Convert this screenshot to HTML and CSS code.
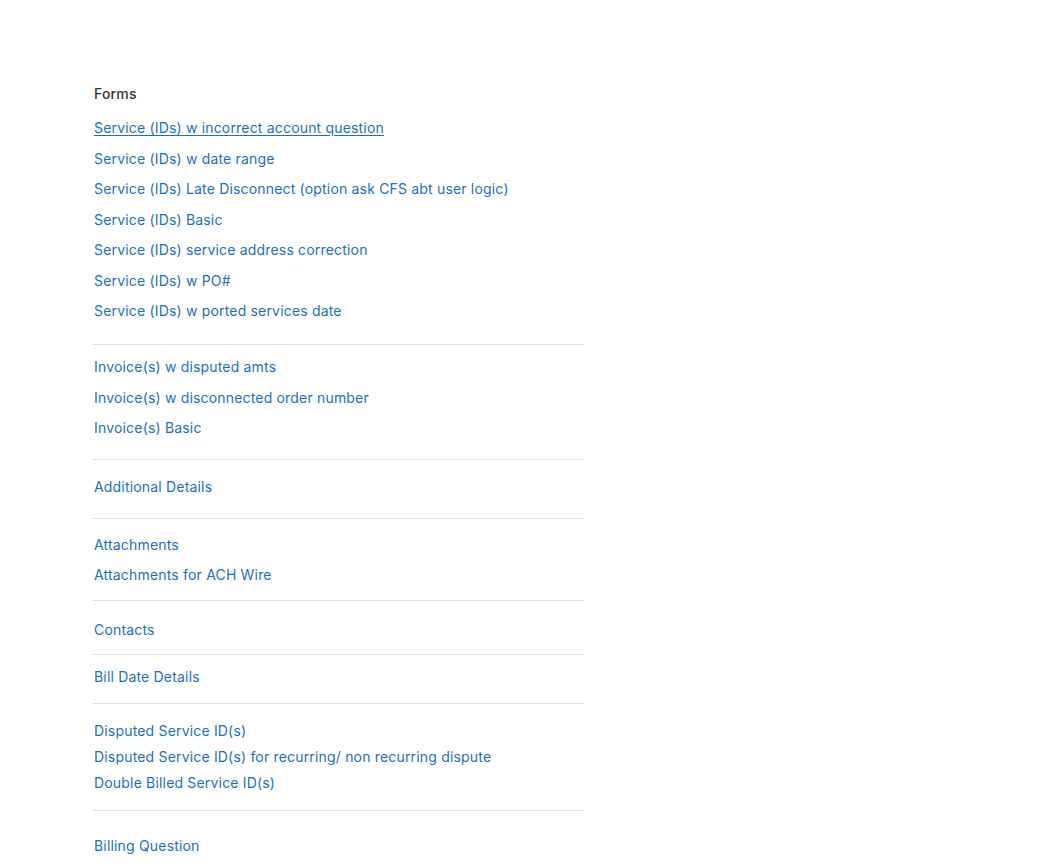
FILE: index.html
```html
<!DOCTYPE html>
<html lang="en">
<head>
<meta charset="utf-8">
<title>Forms</title>
<link rel="stylesheet" href="styles.css">
</head>
<body>
<div class="panel">
  <div class="group g1">
    <div class="title">Forms</div>
    <a class="link hover" href="#">Service (IDs) w incorrect account question</a>
    <a class="link" href="#">Service (IDs) w date range</a>
    <a class="link" href="#">Service (IDs) Late Disconnect (option ask CFS abt user logic)</a>
    <a class="link" href="#">Service (IDs) Basic</a>
    <a class="link" href="#">Service (IDs) service address correction</a>
    <a class="link" href="#">Service (IDs) w PO#</a>
    <a class="link" href="#">Service (IDs) w ported services date</a>
  </div>
  <div class="group g2">
    <a class="link" href="#">Invoice(s) w disputed amts</a>
    <a class="link" href="#">Invoice(s) w disconnected order number</a>
    <a class="link" href="#">Invoice(s) Basic</a>
  </div>
  <div class="group g3">
    <a class="link" href="#">Additional Details</a>
  </div>
  <div class="group g4">
    <a class="link" href="#">Attachments</a>
    <a class="link" href="#">Attachments for ACH Wire</a>
  </div>
  <div class="group g5">
    <a class="link" href="#">Contacts</a>
  </div>
  <div class="group g6">
    <a class="link" href="#">Bill Date Details</a>
  </div>
  <div class="group g7">
    <a class="link" href="#">Disputed Service ID(s)</a>
    <a class="link" href="#">Disputed Service ID(s) for recurring/ non recurring dispute</a>
    <a class="link" href="#">Double Billed Service ID(s)</a>
  </div>
  <div class="group g8 last">
    <a class="link" href="#">Billing Question</a>
  </div>
</div>
</body>
</html>
```

FILE: styles.css
```css
html, body {
  margin: 0;
  padding: 0;
  background: #ffffff;
}

body {
  font-family: Inter, "Noto Sans", "Liberation Sans", sans-serif;
  font-size: 14px;
  line-height: 20px;
  letter-spacing: 0.18px;
}

.panel {
  width: 492px;
  margin-left: 92px;
  padding-top: 84px;
}

.group {
  display: flex;
  flex-direction: column;
  gap: 10.5px;
  padding-left: 2px;
  border-bottom: 1px solid #e0e0e0;
}

.group.last {
  border-bottom: none;
}

.title {
  color: #333333;
  font-weight: 500;
  height: 20px;
  margin-bottom: 3.5px;
}

.link {
  display: block;
  color: #1a6fc4;
  text-decoration: none;
  height: 20px;
  align-self: flex-start;
}

.link.hover {
  text-decoration: underline;
  text-underline-offset: 2px;
}

.g1 { padding-bottom: 23px; }
.g2 { padding-top: 12px; padding-bottom: 21px; }
.g3 { padding-top: 17px; padding-bottom: 21px; }
.g4 { padding-top: 16px; padding-bottom: 15px; gap: 10px; }
.g5 { padding-top: 19px; padding-bottom: 14px; }
.g6 { padding-top: 12px; padding-bottom: 16px; }
.g7 { padding-top: 17px; padding-bottom: 17px; gap: 6px; }
.g8 { padding-top: 25px; }
```
